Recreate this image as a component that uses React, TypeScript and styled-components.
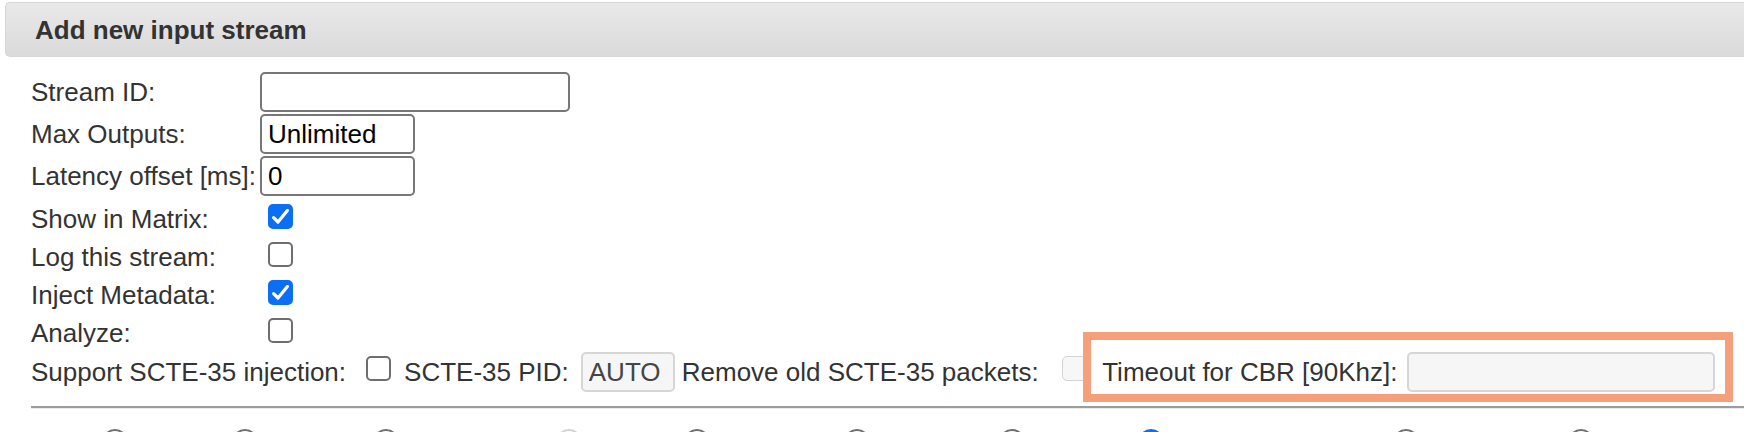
import React from "react";
import styled, { createGlobalStyle, css } from "styled-components";

const GlobalStyle = createGlobalStyle`
  html, body {
    margin: 0;
    padding: 0;
    background: #ffffff;
  }
  body {
    font-family: "Liberation Sans", Arial, Helvetica, sans-serif;
    color: #333333;
    overflow: hidden;
  }
`;

const Page = styled.div`
  width: 1744px;
  height: 432px;
  overflow: hidden;
  box-sizing: border-box;
  padding-top: 2px;
`;

const Header = styled.div`
  margin-left: 5px;
  height: 55px;
  box-sizing: border-box;
  display: flex;
  align-items: center;
  padding-left: 29px;
  background: linear-gradient(#e9e9e9, #dadada);
  border: 1px solid #d6d6d6;
  border-right: none;
  border-radius: 5px 0 0 5px;
`;

const Title = styled.h2`
  margin: 0;
  font-size: 26px;
  line-height: 30px;
  font-weight: bold;
  color: #333333;
`;

const Form = styled.form`
  margin: 0;
  padding: 15px 0 0 31px;
`;

const FieldList = styled.div`
  display: flex;
  flex-direction: column;
  gap: 2px;
`;

const Row = styled.div<{ $height: number }>`
  display: grid;
  grid-template-columns: 229px auto;
  align-items: center;
  justify-items: start;
  height: ${(p) => p.$height}px;
`;

const Label = styled.span<{ $ml?: number; $drop?: boolean }>`
  font-size: 26px;
  line-height: 30px;
  color: #333333;
  white-space: nowrap;
  margin-left: ${(p) => p.$ml ?? 0}px;
  ${(p) =>
    p.$drop &&
    css`
      margin-top: 6px;
    `}
`;

const TextInput = styled.input<{ $width: number; $muted?: boolean; $ml?: number }>`
  width: ${(p) => p.$width}px;
  height: 40px;
  box-sizing: border-box;
  margin: 0 0 0 ${(p) => p.$ml ?? 0}px;
  padding: 0 6px;
  border: 2px solid #777777;
  border-radius: 5px;
  background: #ffffff;
  color: #000000;
  font-family: "Liberation Sans", Arial, sans-serif;
  font-size: 26px;
  outline: none;
  ${(p) =>
    p.$muted &&
    css`
      border-color: #d6d6d6;
      background: #f6f6f6;
      color: #454545;
    `}
`;

const CheckBox = styled.span<{ $checked?: boolean; $disabled?: boolean; $ml?: number; $lift?: number }>`
  display: inline-flex;
  align-items: center;
  justify-content: center;
  flex: none;
  width: 25px;
  height: 25px;
  box-sizing: border-box;
  margin: 0 0 ${(p) => p.$lift ?? 0}px ${(p) => p.$ml ?? 0}px;
  border: 2px solid #6e6e6e;
  border-radius: 5px;
  background: #ffffff;
  ${(p) =>
    p.$checked &&
    css`
      border-color: #0b6ff5;
      background: #0b6ff5;
    `}
  ${(p) =>
    p.$disabled &&
    css`
      border: 1.5px solid #d4d4d4;
      background: #f7f7f7;
    `}
`;

const Check = ({
  checked,
  disabled,
  ml,
  lift,
}: {
  checked?: boolean;
  disabled?: boolean;
  ml?: number;
  lift?: number;
}) => (
  <CheckBox role="checkbox" aria-checked={!!checked} $checked={checked} $disabled={disabled} $ml={ml} $lift={lift}>
    {checked && (
      <svg width="21" height="21" viewBox="0 0 21 21" aria-hidden="true">
        <path d="M3.6 11.6 L8 16 L17.4 4.6" fill="none" stroke="#ffffff" strokeWidth="3.2" strokeLinecap="round" strokeLinejoin="round" />
      </svg>
    )}
  </CheckBox>
);

const InlineRow = styled.div`
  display: flex;
  align-items: center;
  height: 40px;
  margin-top: 4px;
`;

const Highlighted = styled.span<{ $ml: number }>`
  position: relative;
  display: inline-flex;
  align-items: center;
  margin-left: ${(p) => p.$ml}px;
`;

const Annotation = styled.span`
  position: absolute;
  top: -20px;
  bottom: -10px;
  left: -19.5px;
  right: -18px;
  border: 8px solid #f5a07b;
  pointer-events: none;
`;

const Divider = styled.hr`
  margin: 14px 0 0 0;
  height: 0;
  border: 0;
  border-top: 2px solid #9c9c9c;
  border-bottom: 1px solid #ebebeb;
`;

const RadioRow = styled.div`
  display: flex;
  margin-top: 20px;
  padding-left: 70.5px;
`;

const RadioSlot = styled.span`
  display: inline-flex;
  flex: none;
`;

const Radio = styled.span<{ $state: "off" | "on" | "disabled" }>`
  width: 26px;
  height: 26px;
  box-sizing: border-box;
  border-radius: 50%;
  border: 2px solid #707070;
  background: #ffffff;
  ${(p) =>
    p.$state === "on" &&
    css`
      border: 8px solid #0b6ff5;
    `}
  ${(p) =>
    p.$state === "disabled" &&
    css`
      border-color: #d3d3d3;
    `}
`;

const radios: { width: number; state: "off" | "on" | "disabled" }[] = [
  { width: 130.2, state: "off" },
  { width: 141.3, state: "off" },
  { width: 183, state: "off" },
  { width: 128, state: "disabled" },
  { width: 160.5, state: "off" },
  { width: 154.5, state: "off" },
  { width: 139, state: "off" },
  { width: 255, state: "on" },
  { width: 175, state: "off" },
  { width: 60, state: "off" },
];

const checkRows = [
  { label: "Show in Matrix:", checked: true },
  { label: "Log this stream:", checked: false },
  { label: "Inject Metadata:", checked: true },
  { label: "Analyze:", checked: false },
];

export default function App() {
  return (
    <>
      <GlobalStyle />
      <Page>
        <Header>
          <Title>Add new input stream</Title>
        </Header>
        <Form onSubmit={(e) => e.preventDefault()}>
          <FieldList>
            <Row $height={40}>
              <Label>Stream ID:</Label>
              <TextInput $width={310} defaultValue="" />
            </Row>
            <Row $height={40}>
              <Label>Max Outputs:</Label>
              <TextInput $width={155} defaultValue="Unlimited" />
            </Row>
            <Row $height={40}>
              <Label>Latency offset [ms]:</Label>
              <TextInput $width={155} defaultValue="0" />
            </Row>
            {checkRows.map((r) => (
              <Row key={r.label} $height={36}>
                <Label $drop>{r.label}</Label>
                <Check checked={r.checked} ml={8} />
              </Row>
            ))}
          </FieldList>
          <InlineRow>
            <Label>Support SCTE-35 injection:</Label>
            <Check ml={19.5} lift={8} />
            <Label $ml={13.5}>SCTE-35 PID:</Label>
            <TextInput $width={94} $ml={12} $muted defaultValue="AUTO" disabled />
            <Label $ml={7}>Remove old SCTE-35 packets:</Label>
            <Check ml={23} lift={8} disabled />
            <Highlighted $ml={15.5}>
              <Label>Timeout for CBR [90Khz]:</Label>
              <TextInput $width={308} $ml={9.5} $muted defaultValue="" disabled />
              <Annotation />
            </Highlighted>
          </InlineRow>
          <Divider />
          <RadioRow>
            {radios.map((r, i) => (
              <RadioSlot key={i} style={{ width: r.width }}>
                <Radio $state={r.state} />
              </RadioSlot>
            ))}
          </RadioRow>
        </Form>
      </Page>
    </>
  );
}
